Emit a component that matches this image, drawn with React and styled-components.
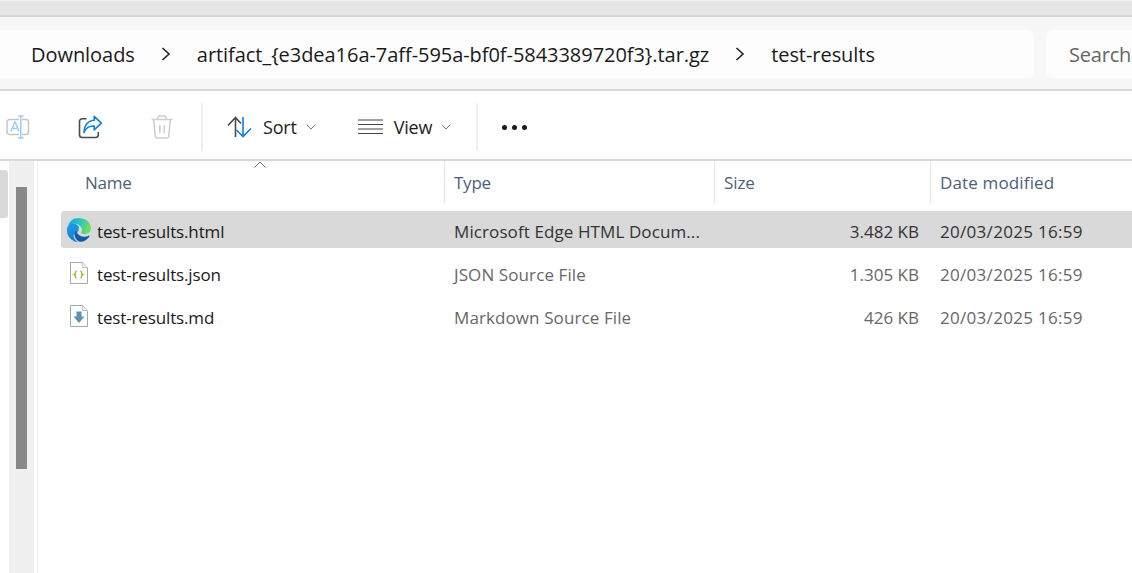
import React from "react";
import styled, { createGlobalStyle } from "styled-components";

const Global = createGlobalStyle`
  html, body { margin: 0; padding: 0; background: #fff; overflow: hidden; }
  * { box-sizing: border-box; }
  body { font-family: "Open Sans", "Noto Sans", "Liberation Sans", sans-serif; }
`;

const Page = styled.div`
  width: 1132px;
  height: 573px;
  display: flex;
  flex-direction: column;
  overflow: hidden;
  background: #fff;
`;

const TitleStrip = styled.div`
  height: 17px;
  flex: none;
  background: #e6e6e6;
  border-top: 1px solid #f2f2f2;
  border-bottom: 2px solid #d6d6d6;
`;

const AddressBand = styled.div`
  height: 74px;
  flex: none;
  background: #f7f7f7;
  border-bottom: 2px solid #d9d9d9;
  padding-top: 13px;
  display: flex;
  align-items: flex-start;
  gap: 12px;
`;

const AddressBox = styled.div`
  width: 1034px;
  height: 48px;
  flex: none;
  background: #fdfdfd;
  border-radius: 0 6px 6px 0;
  padding-left: 31px;
  display: flex;
  align-items: center;
  gap: 26px;
`;

const Crumb = styled.span`
  font-size: 20px;
  letter-spacing: -0.05px;
  color: #1a1a1a;
  white-space: nowrap;
`;

const SearchBox = styled.div`
  flex: 1;
  height: 48px;
  background: #fdfdfd;
  border-radius: 6px 0 0 6px;
  padding-left: 23px;
  display: flex;
  align-items: center;
  font-size: 20px;
  letter-spacing: -0.2px;
  color: #666;
  white-space: nowrap;
  overflow: hidden;
`;

const Toolbar = styled.div`
  height: 70px;
  flex: none;
  border-bottom: 2px solid #d9d9d9;
  padding: 4px 0 0 6px;
  display: flex;
  align-items: center;
`;

const IconButton = styled.div`
  width: 24px;
  height: 24px;
  margin-right: ${(p) => p.$right}px;
  flex: none;
  display: flex;
`;

const Divider = styled.div`
  width: 2px;
  height: 48px;
  background: #efefef;
  flex: none;
`;

const ToolButton = styled.div`
  display: flex;
  align-items: center;
  flex: none;
  margin-left: ${(p) => p.$left}px;
  font-size: 18px;
  letter-spacing: -0.2px;
  color: #1c1c1c;
`;

const ToolLabel = styled.span`
  margin-left: ${(p) => p.$gap}px;
  margin-right: 9px;
`;

const Dots = styled.div`
  margin-left: 24px;
  display: flex;
  gap: 5px;
  flex: none;
`;

const Dot = styled.span`
  width: 5px;
  height: 5px;
  border-radius: 50%;
  background: #1a1a1a;
`;

const Body = styled.div`
  flex: 1;
  display: flex;
  min-height: 0;
`;

const LeftEdge = styled.div`
  width: 9px;
  flex: none;
  padding-top: 9px;
`;

const EdgeTab = styled.div`
  width: 8px;
  height: 48px;
  background: #d9d9d9;
  border-radius: 0 3px 3px 0;
`;

const ScrollTrack = styled.div`
  width: 25px;
  flex: none;
  background: #f0f0f0;
  padding: 26px 0 0 7px;
`;

const ScrollThumb = styled.div`
  width: 11px;
  height: 282px;
  background: #888;
`;

const PaneLine = styled.div`
  width: 1px;
  margin-left: 3px;
  margin-right: 23px;
  flex: none;
  background: #f3f3f3;
`;

const Listing = styled.div`
  flex: 1;
  min-width: 0;
  position: relative;
`;

const SortCaret = styled.svg`
  position: absolute;
  left: 193px;
  top: 0;
`;

const Columns = `
  display: grid;
  grid-template-columns: 384px 270px 216px 1fr;
`;

const HeaderRow = styled.div`
  ${Columns}
  height: 42px;
  margin-bottom: 8px;
`;

const HeaderCell = styled.div`
  font-size: 17px;
  letter-spacing: ${(p) => p.$track ?? -0.25}px;
  color: #4c607a;
  display: flex;
  align-items: center;
  padding-left: ${(p) => p.$pad}px;
  border-right: ${(p) => (p.$last ? "none" : "1px solid #e3e3e3")};
`;

const RowList = styled.div`
  display: flex;
  flex-direction: column;
  gap: 6px;
`;

const Row = styled.div`
  ${Columns}
  height: 37px;
  align-items: center;
  padding-top: 3px;
  border-radius: 3px 0 0 3px;
  background: ${(p) => (p.$selected ? "#d9d9d9" : "transparent")};
`;

const NameCell = styled.div`
  display: flex;
  align-items: center;
  padding-left: ${(p) => p.$iconLeft}px;
  font-size: 17px;
  letter-spacing: -0.14px;
  color: #1a1a1a;
  white-space: nowrap;
`;

const NameIcon = styled.span`
  display: flex;
  width: ${(p) => p.$w}px;
  margin-right: ${(p) => p.$gap}px;
  flex: none;
  margin-top: -3px;
`;

const TypeCell = styled.div`
  padding-left: 9px;
  font-size: 17px;
  letter-spacing: 0.1px;
  white-space: nowrap;
  overflow: hidden;
  color: ${(p) => (p.$selected ? "#333" : "#676767")};
`;

const SizeCell = styled.div`
  text-align: right;
  padding-right: 12px;
  font-size: 17px;
  letter-spacing: 0px;
  white-space: nowrap;
  color: ${(p) => (p.$selected ? "#333" : "#676767")};
`;

const DateCell = styled.div`
  padding-left: 9px;
  font-size: 17px;
  letter-spacing: 0.3px;
  white-space: nowrap;
  color: ${(p) => (p.$selected ? "#333" : "#676767")};
`;

const Chevron = () => (
  <svg width="10" height="16" viewBox="0 0 10 16" fill="none" style={{ flex: "none" }}>
    <path d="M1.5 2 L8 8 L1.5 14" stroke="#222" strokeWidth="1.6" />
  </svg>
);

const SmallCaret = () => (
  <svg width="10" height="6" viewBox="0 0 10 6" fill="none">
    <path d="M0.7 0.7 L5 5 L9.3 0.7" stroke="#777" strokeWidth="1" />
  </svg>
);

const RenameIcon = () => (
  <svg width="24" height="24" viewBox="0 0 24 24" fill="none">
    <path d="M16 4.5h4a2.5 2.5 0 0 1 2.5 2.5v10a2.5 2.5 0 0 1-2.5 2.5h-4" stroke="#c6c6c6" strokeWidth="1.5" />
    <path d="M13 4.5H3.500A2.500 2.500 0 0 0 1 7v10a2.500 2.500 0 0 0 2.500 2.500H13" stroke="#c6c6c6" strokeWidth="1.5" />
    <path d="M4.800 16.500 L8.800 7 h0.400 L13 16.500 M6.200 13.500 h6" stroke="#9ccdf3" strokeWidth="1.5" />
    <path d="M14.800 1v22 M12 1h5.600 M12 23h5.600" stroke="#9ccdf3" strokeWidth="1.5" />
  </svg>
);

const ShareIcon = () => (
  <svg width="24" height="24" viewBox="0 0 24 24" fill="none">
    <path d="M8.500 3.700H4.300a2.800 2.800 0 0 0-2.800 2.800v13.200a2.800 2.800 0 0 0 2.800 2.800h13.200a2.800 2.800 0 0 0 2.800-2.800v-2.700" stroke="#4b4b4b" strokeWidth="1.6" />
    <path d="M16.200 1.300 L23.300 8.100 L16.200 14.900 V11 C11 10.800 7.700 12.700 6 17.500 C5.700 10.800 9.800 5.700 16.200 5.300 Z" stroke="#0f7fdc" strokeWidth="1.6" strokeLinejoin="round" />
  </svg>
);

const TrashIcon = () => (
  <svg width="24" height="24" viewBox="0 0 24 24" fill="none" stroke="#cdcdcd" strokeWidth="1.5">
    <path d="M1.500 4.500h21 M8 4.500V3a2 2 0 0 1 2-2h4a2 2 0 0 1 2 2v1.500" />
    <path d="M3.600 4.500 L5.300 21a2 2 0 0 0 2 2h9.400a2 2 0 0 0 2-2l1.700-16.500" />
    <path d="M9.800 10v8 M14.200 10v8" />
  </svg>
);

const SortIcon = () => (
  <svg width="25" height="22" viewBox="0 0 25 22" fill="none" strokeWidth="1.6">
    <path d="M1 9.500 L8.500 1.500 L14 7.500 M8.500 1.500 V21" stroke="#4a4a4a" />
    <path d="M16 1 V20.500 M9.500 14 L16 20.500 L24 12.500" stroke="#0f7fdc" />
  </svg>
);

const ViewIcon = () => (
  <svg width="25" height="16" viewBox="0 0 25 16" fill="none" stroke="#444" strokeWidth="1.2">
    <path d="M0 1h25 M0 5.500h25 M0 10h25 M0 14.500h25" />
  </svg>
);

const EdgeIcon = () => (
  <svg width="24" height="24" viewBox="0 0 24 24">
    <defs>
      <linearGradient id="edgeTop" x1="0.05" y1="0.3" x2="0.95" y2="0.5">
        <stop offset="0" stopColor="#1a9fe0" />
        <stop offset="0.45" stopColor="#28c4c4" />
        <stop offset="1" stopColor="#72de5a" />
      </linearGradient>
      <linearGradient id="edgeLeft" x1="0.2" y1="0" x2="0.7" y2="1">
        <stop offset="0" stopColor="#1e9ee4" />
        <stop offset="1" stopColor="#1077cc" />
      </linearGradient>
    </defs>
    <circle cx="6" cy="11" r="5.800" fill="#1a96e0" />
    <path
      d="M21.860 17.860q.14 0 .25.12.1.13.1.25t-.11.33l-.32.46-.43.53-.44.5q-.21.25-.38.42l-.22.23q-.58.53-1.340 1.040-.76.51-1.600.91-.86.4-1.740.64t-1.670.24q-.9 0-1.690-.28-.8-.28-1.480-.78-.68-.5-1.220-1.170-.53-.66-.92-1.440-.38-.77-.58-1.600-.2-.83-.2-1.670 0-1 .32-1.960.33-.97.87-1.800.14.95.55 1.770.41.82 1.020 1.500.6.68 1.380 1.210.78.54 1.640.9.86.36 1.770.56.92.2 1.800.2 1.120 0 2.180-.24 1.060-.23 2.060-.72l.2-.1.2-.05z"
      fill="#0e5aa6"
      stroke="#0e5aa6"
      strokeWidth="0.5"
    />
    <path
      d="M6.360 16.590q0 1.100.27 2.150.27 1.060.78 2.030.51.96 1.240 1.770.74.82 1.660 1.400-1.470-.2-2.800-.74-1.330-.55-2.480-1.370-1.150-.83-2.080-1.900-.92-1.070-1.580-2.330T.36 14.940Q0 13.540 0 12.060q0-.81.32-1.490.31-.68.83-1.230.53-.55 1.200-.96.66-.4 1.350-.66.74-.27 1.500-.39.78-.12 1.550-.12.7 0 1.420.1.72.12 1.400.35.68.23 1.320.57.63.35 1.160.83-.35 0-.7.07-.33.07-.65.23v-.02q-.63.28-1.200.74-.57.46-1.050 1.040-.48.58-.87 1.260-.38.67-.65 1.390-.27.71-.42 1.440-.15.72-.15 1.380z"
      fill="url(#edgeLeft)"
      stroke="#1a8edc"
      strokeWidth="0.4"
    />
    <path
      d="M11.960.06q1.700 0 3.330.39 1.630.38 3.070 1.150 1.430.77 2.620 1.930 1.180 1.160 1.980 2.700.49.94.76 1.960.28 1 .28 2.080 0 .89-.23 1.700-.24.8-.69 1.480-.45.68-1.100 1.220-.64.53-1.450.88-.54.24-1.110.36-.58.13-1.160.13-.42 0-.97-.03-.54-.03-1.100-.12-.55-.1-1.050-.28-.5-.19-.84-.5-.12-.09-.23-.24-.1-.16-.1-.33 0-.15.16-.35.16-.2.35-.5.2-.28.36-.68.16-.4.16-.95 0-1.060-.4-1.960-.4-.91-1.060-1.640-.66-.74-1.520-1.280-.86-.55-1.790-.89-.84-.3-1.720-.44-.87-.14-1.760-.14-1.550 0-3.060.45T.94 7.550q.71-1.740 1.810-3.130Q3.850 3.030 5.200 2.030q1.340-1 2.900-1.490Q9.660.06 11.960.06z"
      fill="url(#edgeTop)"
    />
  </svg>
);

const DocShape = ({ children }) => (
  <svg width="18" height="22" viewBox="0 0 18 22" fill="none">
    <path d="M0.500 0.500H12.500L17.500 5.500V21.500H0.500Z" fill="#fff" stroke="#a8a8a8" />
    <path d="M12.500 0.500V5.500H17.500" fill="#f2f2f2" stroke="#c4c4c4" />
    {children}
  </svg>
);

const JsonIcon = () => (
  <DocShape>
    <path d="M6.500 9c-1.500 0-1 2.200-1.300 2.900-.2.400-.8.600-.8.600s.6.200.8.600c.3.700-.2 2.900 1.300 2.900" stroke="#acaf28" strokeWidth="1.400" />
    <path d="M10.500 9c1.500 0 1 2.200 1.300 2.900.2.400.8.600.8.600s-.6.200-.8.600c-.3.700.2 2.900-1.300 2.900" stroke="#acaf28" strokeWidth="1.400" />
  </DocShape>
);

const MarkdownIcon = () => (
  <DocShape>
    <path d="M6.500 6.500h5v5h3L9 18 3.500 11.500h3Z" fill="#5b93b3" />
  </DocShape>
);

const files = [
  { name: "test-results.html", type: "Microsoft Edge HTML Docum...", size: "3.482 KB", Icon: EdgeIcon, selected: true, left: 6, w: 24, gap: 6 },
  { name: "test-results.json", type: "JSON Source File", size: "1.305 KB", Icon: JsonIcon, left: 9, w: 18, gap: 9 },
  { name: "test-results.md", type: "Markdown Source File", size: "426 KB", Icon: MarkdownIcon, left: 9, w: 18, gap: 9 },
];

export default function App() {
  return (
    <Page>
      <Global />
      <TitleStrip />
      <AddressBand>
        <AddressBox>
          <Crumb>Downloads</Crumb>
          <Chevron />
          <Crumb>artifact_{"{"}e3dea16a-7aff-595a-bf0f-5843389720f3{"}"}.tar.gz</Crumb>
          <Chevron />
          <Crumb>test-results</Crumb>
        </AddressBox>
        <SearchBox>Search</SearchBox>
      </AddressBand>
      <Toolbar>
        <IconButton $right={48}><RenameIcon /></IconButton>
        <IconButton $right={48}><ShareIcon /></IconButton>
        <IconButton $right={27}><TrashIcon /></IconButton>
        <Divider />
        <ToolButton $left={24}>
          <SortIcon />
          <ToolLabel $gap={11}>Sort</ToolLabel>
          <SmallCaret />
        </ToolButton>
        <ToolButton $left={42}>
          <ViewIcon />
          <ToolLabel $gap={11}>View</ToolLabel>
          <SmallCaret />
        </ToolButton>
        <ToolButton $left={25}><Divider /></ToolButton>
        <Dots><Dot /><Dot /><Dot /></Dots>
      </Toolbar>
      <Body>
        <LeftEdge><EdgeTab /></LeftEdge>
        <ScrollTrack><ScrollThumb /></ScrollTrack>
        <PaneLine />
        <Listing>
          <SortCaret width="12" height="7" viewBox="0 0 12 7" fill="none">
            <path d="M0.500 6.500 L6 1 L11.500 6.500" stroke="#666" strokeWidth="1" />
          </SortCaret>
          <HeaderRow>
            <HeaderCell $pad={24}>Name</HeaderCell>
            <HeaderCell $pad={9}>Type</HeaderCell>
            <HeaderCell $pad={9} $track={-0.1}>Size</HeaderCell>
            <HeaderCell $pad={9} $track={0.15} $last>Date modified</HeaderCell>
          </HeaderRow>
          <RowList>
            {files.map((f) => (
              <Row key={f.name} $selected={f.selected}>
                <NameCell $iconLeft={f.left}>
                  <NameIcon $w={f.w} $gap={f.gap}><f.Icon /></NameIcon>
                  {f.name}
                </NameCell>
                <TypeCell $selected={f.selected}>{f.type}</TypeCell>
                <SizeCell $selected={f.selected}>{f.size}</SizeCell>
                <DateCell $selected={f.selected}>20/03/2025 16:59</DateCell>
              </Row>
            ))}
          </RowList>
        </Listing>
      </Body>
    </Page>
  );
}
